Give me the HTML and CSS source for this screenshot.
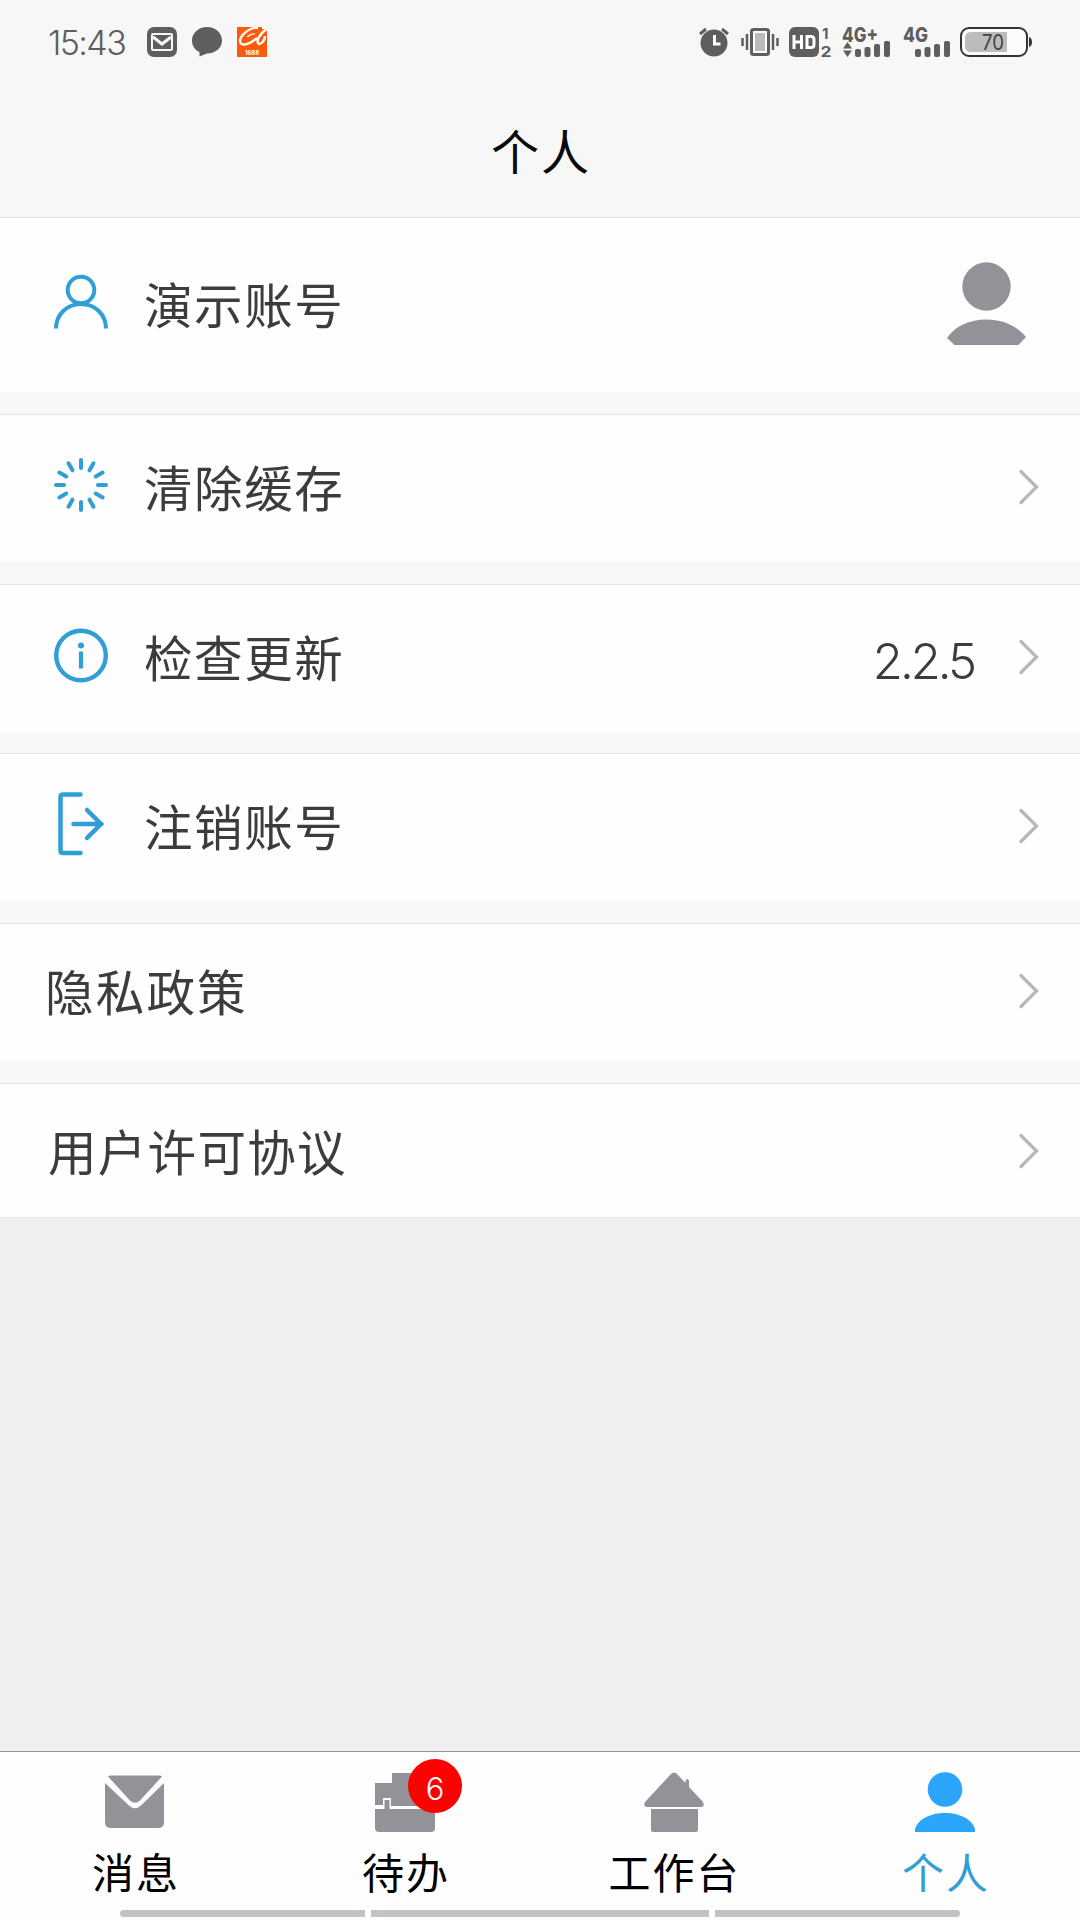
FILE: index.html
```html
<!DOCTYPE html>
<html lang="zh-CN">
<head>
<meta charset="utf-8">
<title>个人</title>
<link rel="stylesheet" href="styles.css">
</head>
<body>
<div class="app">
  <header class="top">
    <div class="status">
      <span class="clock">15:43</span>
      <svg class="notices" width="122" height="32" viewBox="146 26 122 32">
        <rect x="147" y="27" width="30" height="30" rx="7" fill="#5e5e5e"/>
        <rect x="152" y="34" width="20" height="16" rx="1" fill="none" stroke="#f8f8f8" stroke-width="2"/>
        <path d="M153 37l9 7 9-7" fill="none" stroke="#f8f8f8" stroke-width="3"/>
        <path d="M207 27c8.500 0 15 6 15 13.500S215.500 53.500 207 53.500l-7.500 3v-4.500C195 50 192 46 192 40.500 192 33 198.500 27 207 27z" fill="#5e5e5e"/>
        <rect x="237" y="27" width="30" height="30" fill="#fa5a0a"/>
        <path d="M258 28C249 27 240 36 240 41c0 6 9 4 17-3M267 29c-7 4-12 13-8 15 3 0 6-4 6-8M262 28l5-1" fill="none" stroke="#fff" stroke-width="2.400"/>
        <path d="M247 37q5-4 8-3" fill="none" stroke="#fff" stroke-width="1.300"/>
        <text x="245" y="54.500" class="tiny" textLength="14" lengthAdjust="spacingAndGlyphs">1688</text>
      </svg>
      <svg class="system" width="336" height="34" viewBox="698 25 336 34">
        <g fill="#5e5e5e">
          <circle cx="714" cy="43" r="13.500"/>
          <path d="M700 34l6-5M728 34l-6-5" stroke="#5e5e5e" stroke-width="3"/>
          <path d="M714.500 35v9h6" fill="none" stroke="#fff" stroke-width="3"/>
          <rect x="751.500" y="29.500" width="17" height="25" rx="2" fill="#fafafa" stroke="#5e5e5e" stroke-width="3"/>
          <rect x="755" y="33" width="10" height="18" fill="#bbb"/>
          <path d="M747 34v16M742.500 38v8M773 34v16M777.500 38v8" stroke="#5e5e5e" stroke-width="2.500"/>
          <rect x="789" y="27" width="30" height="30" rx="6"/>
          <path d="M794 35v14M801.500 35v14M794 42h7.500M807 36.500v11h4q3 0 3-3v-5q0-3-3-3z" fill="none" stroke="#fff" stroke-width="3"/>
          <text x="822" y="38.500" class="sim">1</text>
          <text x="820.500" y="56.500" class="sim" textLength="11" lengthAdjust="spacingAndGlyphs">2</text>
          <text x="842" y="41.500" class="net" textLength="36" lengthAdjust="spacingAndGlyphs">4G+</text>
          <path d="M843 48.500l4.500-6.500 4.500 6.500zM843 50.500l4.500 6.500 4.500-6.500z"/>
          <g>
            <rect x="855" y="49" width="6" height="8" rx="2"/><rect x="864.500" y="47" width="6" height="10" rx="2"/><rect x="874" y="44" width="6" height="13" rx="2"/><rect x="884" y="41" width="6" height="16" rx="2"/>
            <rect x="915" y="49" width="6" height="8" rx="2"/><rect x="924.500" y="47" width="6" height="10" rx="2"/><rect x="934" y="44" width="6" height="13" rx="2"/><rect x="944" y="41" width="6" height="16" rx="2"/>
          </g>
          <text x="903" y="41.500" class="net" textLength="25" lengthAdjust="spacingAndGlyphs">4G</text>
        </g>
        <rect x="961" y="28" width="66" height="28" rx="8" fill="#fbfbfb" stroke="#333" stroke-width="2"/>
        <path d="M1007 32h-36q-6 0-6 6v8q0 6 6 6h36z" fill="#bcbcbc"/>
        <path d="M1029 37q3 1 3 5t-3 5z" fill="#333"/>
        <text x="982" y="50" class="level" textLength="22" lengthAdjust="spacingAndGlyphs">70</text>
      </svg>
    </div>
    <h1 class="title">个人</h1>
  </header>

  <main class="list">
    <div class="row row-account">
      <svg class="icon" viewBox="0 0 54 66"><g fill="none" stroke="#2f9fd6" stroke-width="4"><circle cx="27" cy="20" r="13.300"/><path d="M2 58.500C2 44.500 13 34 27 34S52 44.500 52 58.500"/></g></svg>
      <span class="label">演示账号</span>
      <svg class="avatar" width="80" height="84" viewBox="0 0 80 84"><g fill="#949199"><circle cx="40.500" cy="24.500" r="24.200"/><path d="M1 76C9 64 24 57.500 40.500 57.500S71 64 80 75l-7.500 8H8.500z"/></g></svg>
    </div>
    <div class="row row-cache">
      <svg class="icon" viewBox="0 0 54 66"><g stroke="#2f9fd6" stroke-width="4" stroke-linecap="round"><path id="ray" d="M27 8v8"/><use href="#ray" transform="rotate(30 27 33)"/><use href="#ray" transform="rotate(60 27 33)"/><use href="#ray" transform="rotate(90 27 33)"/><use href="#ray" transform="rotate(120 27 33)"/><use href="#ray" transform="rotate(150 27 33)"/><use href="#ray" transform="rotate(180 27 33)"/><use href="#ray" transform="rotate(210 27 33)"/><use href="#ray" transform="rotate(240 27 33)"/><use href="#ray" transform="rotate(270 27 33)"/><use href="#ray" transform="rotate(300 27 33)"/><use href="#ray" transform="rotate(330 27 33)"/></g></svg>
      <span class="label">清除缓存</span>
      <svg class="chevron" viewBox="0 0 20 36"><path d="M2 2.500L17.500 18 2 33.500"/></svg>
    </div>
    <div class="row row-update">
      <svg class="icon" viewBox="0 0 54 66"><circle cx="27" cy="32.500" r="24.800" fill="none" stroke="#2f9fd6" stroke-width="4.400"/><circle cx="27" cy="22.500" r="3" fill="#2f9fd6"/><path d="M27 28.500v17" stroke="#2f9fd6" stroke-width="4.200"/></svg>
      <span class="label">检查更新</span>
      <span class="version">2.2.5</span>
      <svg class="chevron" viewBox="0 0 20 36"><path d="M2 2.500L17.500 18 2 33.500"/></svg>
    </div>
    <div class="row row-logout">
      <svg class="icon" viewBox="0 0 54 66"><path d="M26.500 3.500H9Q6.500 3.500 6.500 6v53.500Q6.500 62 9 62H26.500M19.500 33h28M33 19l14 14L33 47" fill="none" stroke="#2f9fd6" stroke-width="4.500" stroke-linecap="round"/></svg>
      <span class="label">注销账号</span>
      <svg class="chevron" viewBox="0 0 20 36"><path d="M2 2.500L17.500 18 2 33.500"/></svg>
    </div>
    <div class="row row-privacy">
      <span class="label">隐私政策</span>
      <svg class="chevron" viewBox="0 0 20 36"><path d="M2 2.500L17.500 18 2 33.500"/></svg>
    </div>
    <div class="row row-license">
      <span class="label">用户许可协议</span>
      <svg class="chevron" viewBox="0 0 20 36"><path d="M2 2.500L17.500 18 2 33.500"/></svg>
    </div>
  </main>

  <nav class="tabs">
    <div class="tab">
      <svg class="tab-icon" viewBox="0 0 60 62"><g fill="#949298"><path d="M3 4.500Q4 3.500 6 3.500H54Q56 3.500 57 4.500L35 28.500Q30 33 25 28.500z"/><path d="M0 11L24 33.500Q30 39 36 33.500L59 11V50Q59 56 53 56H6Q0 56 0 50z"/></g></svg>
      <span>消息</span>
    </div>
    <div class="tab">
      <svg class="tab-icon" viewBox="0 0 60 62"><g fill="#949298"><path d="M0 11H17V1H43V11H60V34H16V26H8V33H0z"/><path d="M0 37H9.500V28H14.500V37H60V56Q60 60 56 60H4Q0 60 0 56z"/></g></svg>
      <b class="badge">6</b>
      <span>待办</span>
    </div>
    <div class="tab tab-work">
      <svg class="tab-icon" viewBox="0 0 60 62"><g fill="#949298"><path d="M27 2Q30-1 33 2L41.500 11V8.500Q43.500 5.500 45 8.500V15L59 30Q61 35 57 35H3Q-1 35 1 30z"/><path d="M7 37H54V58Q54 60 52 60H9Q7 60 7 58z"/></g></svg>
      <span>工作台</span>
    </div>
    <div class="tab active">
      <svg class="tab-icon" viewBox="0 0 60 62"><g fill="#2ba4fb"><circle cx="30" cy="17.500" r="17.300"/><path d="M0 60V57C3 47 16 41 30 41S57 47 60 57V60z"/></g></svg>
      <span>个人</span>
    </div>
    <div class="gesture"><i></i><i></i><i></i></div>
  </nav>
</div>
</body>
</html>
```
FILE: styles.css
```css
* { box-sizing: border-box; }
body {
  margin: 0;
  font-family: Inter, "Noto Sans CJK SC", sans-serif;
  color: #3c3c3e;
}
.app {
  width: 1080px;
  height: 1920px;
  display: flex;
  flex-direction: column;
  background: #f0eef0;
}
svg { display: block; flex: none; overflow: visible; }

.top {
  height: 218px;
  background: #f8f7f8;
  border-bottom: 1px solid #dfdfe1;
}
.status {
  height: 84px;
  display: flex;
  align-items: center;
  padding: 0 46px 0 48px;
}
.clock {
  width: 98px;
  margin-top: 1px;
  font-size: 34px;
  font-weight: 300;
  line-height: 40px;
  letter-spacing: -1.6px;
  color: #5e5e5e;
}
.system { margin-left: auto; }
.tiny { font: 700 6px Inter, sans-serif; fill: #fff; }
.sim { font: 700 15px Inter, sans-serif; }
.net { font: 800 20px Inter, sans-serif; }
.level { font: 400 21px Inter, sans-serif; fill: #444; }
.title {
  margin: 31px 0 0;
  font-size: 48px;
  font-weight: 400;
  line-height: 76px;
  letter-spacing: 2px;
  text-indent: 2px;
  text-align: center;
  color: #0a0a0a;
}

.list {
  display: flex;
  flex-direction: column;
  background: #f8f7f9;
  border-bottom: 1px solid #e6e5e8;
}
.row {
  display: flex;
  align-items: center;
  padding: 0 41px 0 54px;
  background: #fefefe;
  border-top: 1px solid #e3e2e5;
}
.row-account { height: 174px; border-top: 0; padding-right: 54px; }
.row-cache { height: 147px; margin-top: 22px; }
.row-update { height: 148px; margin-top: 23px; }
.row-logout { height: 147px; margin-top: 21px; }
.row-privacy { height: 137px; margin-top: 23px; padding-left: 45px; }
.row-license { height: 134px; margin-top: 23px; padding-left: 48px; }
.icon { width: 54px; height: 66px; margin: 0 36px 6px 0; }
.row-account .icon { margin-bottom: 5px; }
.label {
  flex: 1;
  margin-top: 3px;
  font-size: 48.5px;
  line-height: 72px;
  letter-spacing: 1.6px;
}
.row-privacy .label { letter-spacing: 2.2px; }
.row-license .label { margin-top: 6px; letter-spacing: 1.3px; }
.avatar { margin-bottom: 3px; }
.chevron { width: 20px; height: 36px; margin-bottom: 3px; }
.row-license .chevron { margin-bottom: 0; }
.chevron path { fill: none; stroke: #b7b6ba; stroke-width: 3.2; stroke-linecap: round; }
.version {
  margin: 6px 45px 0 0;
  font-size: 49px;
  font-weight: 300;
  line-height: 60px;
  letter-spacing: -3px;
}

.tabs {
  height: 169px;
  margin-top: auto;
  display: grid;
  grid-template-columns: repeat(4, 270px);
  grid-template-rows: 158px 7px;
  background: #fefefe;
  border-top: 1px solid #939295;
}
.tab {
  position: relative;
  display: flex;
  flex-direction: column;
  align-items: center;
  padding-top: 20px;
  color: #000;
}
.tab-work { padding-right: 3px; }
.tab-icon { width: 60px; height: 62px; }
.tab span {
  margin-top: 9px;
  font-size: 42px;
  line-height: 62px;
  letter-spacing: 2px;
  text-indent: 2px;
}
.tab.active { color: #2f9fd6; }
.badge {
  position: absolute;
  left: 138px;
  top: 7px;
  width: 54px;
  height: 54px;
  border-radius: 50%;
  background: #fe0000;
  color: #fff;
  font-size: 31px;
  font-weight: 300;
  line-height: 60px;
  text-align: center;
}
.gesture {
  grid-column: 1 / -1;
  display: grid;
  grid-template-columns: 245px 338px 245px;
  gap: 6px;
  justify-content: center;
}
.gesture i { background: #c4c2c6; }
.gesture i:first-child { border-radius: 4px 0 0 4px; }
.gesture i:last-child { border-radius: 0 4px 4px 0; }
```
